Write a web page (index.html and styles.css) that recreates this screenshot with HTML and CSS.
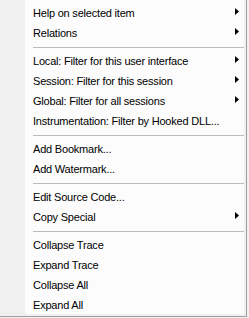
FILE: index.html
```html
<!DOCTYPE html>
<html>
<head>
<meta charset="utf-8">
<link rel="stylesheet" href="styles.css">
</head>
<body>
<div class="frame">
  <ul class="menu">
    <li class="item sub">Help on selected item</li>
    <li class="item sub">Relations</li>
    <li class="sep"></li>
    <li class="item sub">Local: Filter for this user interface</li>
    <li class="item sub">Session: Filter for this session</li>
    <li class="item sub">Global: Filter for all sessions</li>
    <li class="item">Instrumentation: Filter by Hooked DLL...</li>
    <li class="sep"></li>
    <li class="item">Add Bookmark...</li>
    <li class="item">Add Watermark...</li>
    <li class="sep"></li>
    <li class="item">Edit Source Code...</li>
    <li class="item sub">Copy Special</li>
    <li class="sep"></li>
    <li class="item">Collapse Trace</li>
    <li class="item">Expand Trace</li>
    <li class="item">Collapse All</li>
    <li class="item">Expand All</li>
  </ul>
</div>
</body>
</html>
```

FILE: styles.css
```css
html, body {
  margin: 0;
  padding: 0;
}
body {
  width: 249px;
  height: 318px;
  background: #f0f0f0;
  overflow: hidden;
  font-family: "Liberation Sans", Arial, sans-serif;
  font-size: 11px;
  letter-spacing: -0.2px;
  color: #000;
}
.frame {
  width: 244px;
  height: 314px;
  padding: 0 2px 2px 0;
  border-right: 1px solid #a0a0a0;
  border-bottom: 1px solid #a0a0a0;
  background: #f0f0f0;
}
.menu {
  list-style: none;
  margin: 0;
  padding: 3px 0 0 0;
  height: 311px;
  background: linear-gradient(to right, #f0f0f0 0, #f0f0f0 25px, #fcfcfc 25px);
}
.item {
  height: 20px;
  line-height: 20px;
  padding-left: 33px;
  position: relative;
  white-space: nowrap;
}
.sub::after {
  content: "";
  position: absolute;
  left: 235px;
  top: 5px;
  width: 4px;
  height: 7px;
  background: #000;
  clip-path: polygon(0 0, 100% 50%, 0 100%);
}
.sep {
  height: 1px;
  margin: 3.5px 0 3.5px 33px;
  background: #bcbcbc;
}
```
